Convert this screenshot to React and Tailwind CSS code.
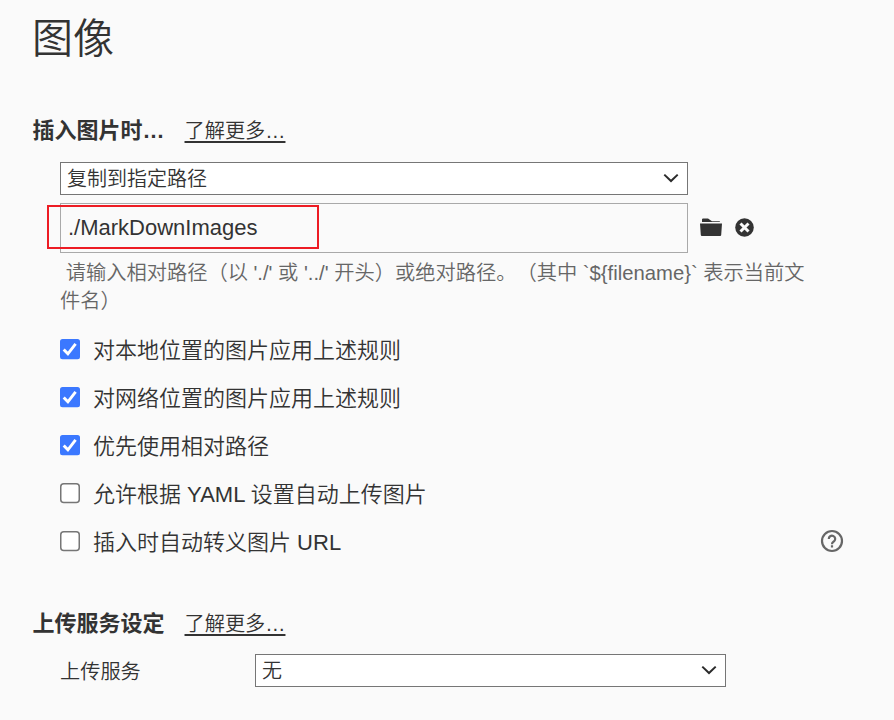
import React from "react";

const rules = [
  { label: "对本地位置的图片应用上述规则", checked: true },
  { label: "对网络位置的图片应用上述规则", checked: true },
  { label: "优先使用相对路径", checked: true },
  { label: "允许根据 YAML 设置自动上传图片", checked: false },
  { label: "插入时自动转义图片 URL", checked: false, help: true },
];

function SectionTitle({ title }) {
  return (
    <div className="flex h-8 items-center gap-5 pl-[32.5px]">
      <h2 className="text-[22px] leading-8 font-bold">{title}</h2>
      <a className="flex h-6 items-center text-[20.2px] leading-6 font-[350] underline decoration-[1.5px] underline-offset-[3px]">
        了解更多…
      </a>
    </div>
  );
}

function Select({ value, width }) {
  return (
    <div
      className={`flex h-[33px] items-center justify-between border border-[#767676] bg-white pr-2 pl-[6px] text-[20px] font-[350] ${width}`}
    >
      <span className="pt-[2px] leading-[29px]">{value}</span>
      <svg className="mb-px h-4 w-4" viewBox="0 0 16 16" fill="none" stroke="#2b2b2b" strokeWidth="2">
        <path d="M1.300 4.600 8 11l6.700-6.400" />
      </svg>
    </div>
  );
}

function Checkbox({ checked }) {
  return (
    <svg className="mb-[1px] block h-[21px] w-5 shrink-0" viewBox="0 0 20 21">
      {checked ? (
        <>
          <rect y="0" width="20" height="20.200" rx="2.500" fill="#3b78ff" />
          <path d="m3.700 10.400 4.200 4.400 7.700-10" fill="none" stroke="#fff" strokeWidth="2.900" />
        </>
      ) : (
        <rect x="0.750" y="0.750" width="18.500" height="18.800" rx="3" fill="#fff" stroke="#767676" strokeWidth="1.500" />
      )}
    </svg>
  );
}

export default function App() {
  return (
    <main className="h-[720px] w-[894px] overflow-hidden bg-[#fafafa] font-['Liberation_Sans','Noto_Sans_CJK_SC',sans-serif] text-[#333]">
      <h1 className="h-[115px] pt-px pl-8 text-[41px] leading-[76px] font-[350]">图像</h1>

      <SectionTitle title="插入图片时…" />

      <section className="pt-[15px] pl-[60px]">
        <Select value="复制到指定路径" width="w-[628px]" />
        <div className="mt-2 flex h-[50px] items-center">
          <div className="relative flex h-full w-[628px] items-center border border-[#a9a9a9] pb-[2px] pl-[7px] text-[22px]">
            ./MarkDownImages
            <span className="absolute top-[1px] -left-[14px] h-[44px] w-[272px] border-2 border-[#ed1c24]" />
          </div>
          <svg className="mb-[2px] ml-3 h-[18px] w-[22px]" viewBox="0 0 22 18" fill="#333">
            <path d="M2 4V1.600Q2 .5 3.100.5h4.700q.8 0 1.300.8L12 3.200h7.200q.9 0 .9.8zM0 5.500h22l-.8 11.500q-.1 1-1.100 1H1.900q-1 0-1.100-1z" />
          </svg>
          <svg className="mb-[2px] ml-[13px] h-[19px] w-[19px]" viewBox="0 0 19 19">
            <circle cx="9.500" cy="9.500" r="9.300" fill="#333" />
            <path d="m5.500 5.500 8 8m0-8-8 8" stroke="#fafafa" strokeWidth="3" />
          </svg>
        </div>
        <p className="mt-[6px] w-[770px] text-[20.25px] leading-[28px] font-[350] text-[#666] [text-spacing-trim:space-all]">
          &nbsp;请输入相对路径（以 './' 或 '../' 开头）或绝对路径。（其中 `${"{filename}"}` 表示当前文
          <br />
          件名）
        </p>
        <div className="mt-[11px]">
          {rules.map((rule) => (
            <div key={rule.label} className="flex h-12 items-center">
              <Checkbox checked={rule.checked} />
              <span className="ml-[13px] pt-[2px] text-[22px] leading-8 font-[350]">{rule.label}</span>
              {rule.help && (
                <svg className="mr-[50.5px] mb-[3px] ml-auto h-6 w-6" viewBox="0 0 24 24" fill="none" stroke="#666" strokeWidth="2.200">
                  <circle cx="12" cy="12" r="10" />
                  <path d="M8.800 10a3.200 3.200 0 1 1 5.400 2.200C12.900 13.300 12 13.700 12 15.200M12 16.200v2.200" />
                </svg>
              )}
            </div>
          ))}
        </div>
      </section>

      <div className="h-[42px]" />
      <SectionTitle title="上传服务设定" />
      <section className="flex items-center pt-[14px] pl-[60px]">
        <span className="w-[195px] pt-[3px] text-[20.2px] leading-[30px] font-[350]">上传服务</span>
        <Select value="无" width="w-[471px]" />
      </section>
    </main>
  );
}
